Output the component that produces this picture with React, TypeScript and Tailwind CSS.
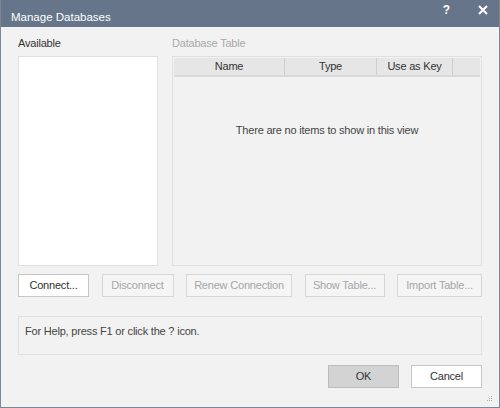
import React from "react";

const font = { fontFamily: '"Liberation Sans", Arial, sans-serif', letterSpacing: "-0.2px" };

function Btn({ label, disabled, w, primary }: { label: string; disabled?: boolean; w: string; primary?: boolean }) {
  return (
    <div
      className={`${w} h-[23px] flex items-center justify-center text-[11px] border ${
        primary
          ? "bg-[#d3d3d3] border-[#bdbdbd] text-[#333]"
          : disabled
          ? "bg-[#f5f5f5] border-[#d6d6d6] text-[#a6a6a6]"
          : "bg-white border-[#c6c6c6] text-[#333]"
      }`}
    >
      {label}
    </div>
  );
}

export default function App() {
  return (
    <div className="w-[500px] h-[408px] flex flex-col bg-[#f2f2f2] border border-t-0 border-[#7d8796] overflow-hidden" style={font}>
      <div className="h-[27px] bg-[#66758a] flex items-center pl-[11px] pr-[12px] shrink-0 -mx-px">
        <span className="text-white text-[11.5px] mt-[8px] tracking-normal">
          Manage Databases
        </span>
        <div className="ml-auto flex items-center gap-[28px] text-white -mt-[8px]">
          <span className="text-[12px] font-bold">?</span>
          <svg width="10" height="10" viewBox="0 0 10 10">
            <path d="M1 1L9 9M9 1L1 9" stroke="white" strokeWidth="2" />
          </svg>
        </div>
      </div>
      <div className="flex-1 flex flex-col px-[17px] pt-[10px]">
        <div className="flex gap-[14px]">
          <div className="flex flex-col w-[140px]">
            <div className="text-[11px] text-[#333] h-[19px] leading-[12px]">Available</div>
            <div className="h-[210px] bg-white border border-[#e0e0e0]" />
          </div>
          <div className="flex flex-col flex-1">
            <div className="text-[11px] text-[#a9a9a9] h-[19px] leading-[12px]">Database Table</div>
            <div className="h-[210px] border border-[#e0e0e0] bg-[#f2f2f2] p-px flex flex-col">
              <div className="h-[19px] flex bg-[#e6e6e6] border-b-2 border-[#d9d9d9] text-[11px] text-[#333]">
                <div className="w-[111px] flex items-center justify-center border-r border-[#cfcfcf]">Name</div>
                <div className="w-[92px] flex items-center justify-center border-r border-[#cfcfcf]">Type</div>
                <div className="w-[76px] flex items-center justify-center border-r border-[#cfcfcf]">Use as Key</div>
                <div className="flex-1" />
              </div>
              <div className="flex justify-center pt-[45px] text-[11px] text-[#444]">There are no items to show in this view</div>
            </div>
          </div>
        </div>
        <div className="flex justify-between mt-[8px]">
          <Btn label="Connect..." w="w-[71px]" />
          <Btn label="Disconnect" w="w-[72px]" disabled />
          <Btn label="Renew Connection" w="w-[106px]" disabled />
          <Btn label="Show Table..." w="w-[80px]" disabled />
          <Btn label="Import Table..." w="w-[85px]" disabled />
        </div>
        <div className="mt-[19px] h-[39px] border border-[#e0e0e0] bg-[#f2f2f2] px-[6px] pt-[6px] text-[11px] text-[#444]">
          For Help, press F1 or click the ? icon.
        </div>
        <div className="flex justify-end gap-[12px] mt-[10px]">
          <Btn label="OK" w="w-[71px]" primary />
          <Btn label="Cancel" w="w-[71px]" />
        </div>
      </div>
      <div className="relative h-0">
        <svg className="absolute right-[6px] bottom-[5px]" width="6" height="6" viewBox="0 0 6 6">
          <rect x="4" y="0" width="1" height="1" fill="#aaa" />
          <rect x="2" y="2" width="1" height="1" fill="#aaa" />
          <rect x="4" y="2" width="1" height="1" fill="#aaa" />
          <rect x="0" y="4" width="1" height="1" fill="#aaa" />
          <rect x="2" y="4" width="1" height="1" fill="#aaa" />
          <rect x="4" y="4" width="1" height="1" fill="#aaa" />
        </svg>
      </div>
    </div>
  );
}
